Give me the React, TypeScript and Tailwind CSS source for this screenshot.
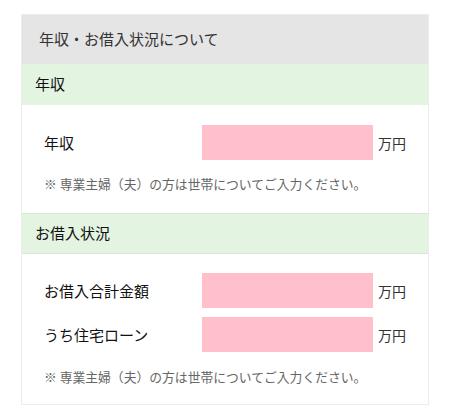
import React from "react";

const font = { fontFamily: '"Noto Sans CJK JP", "Noto Sans", sans-serif' };

function Row({ label }: { label: string }) {
  return (
    <div className="flex items-center">
      <div className="flex-1 text-[15px] text-[#111] leading-none">{label}</div>
      <div className="w-[171px] h-[35px] bg-[#ffc0cb]" />
      <div className="ml-[5px] w-[28px] text-[14px] text-[#333] leading-none">万円</div>
    </div>
  );
}

function Note() {
  return (
    <div className="text-[12.8px] leading-[18px] text-[#666]">
      ※ 専業主婦（夫）の方は世帯についてご入力ください。
    </div>
  );
}

export default function App() {
  return (
    <div className="w-[450px] h-[418px] bg-white pt-[14px]" style={font}>
      <div className="mx-[21px] border border-[#ececec] bg-white">
        <div className="h-[49px] bg-[#e5e5e5] flex items-center pl-[17px] text-[15px] text-[#333]">
          年収・お借入状況について
        </div>
        <div className="h-[41px] bg-[#e3f4e1] flex items-center pl-[13px] text-[15px] text-[#111]">
          年収
        </div>
        <div className="px-[22px] pt-[20px] pb-[20px]">
          <Row label="年収" />
          <div className="mt-[15px]">
            <Note />
          </div>
        </div>
        <div className="h-[41px] bg-[#e3f4e1] border-y border-[#d8e6d6] flex items-center pl-[13px] text-[15px] text-[#111]">
          お借入状況
        </div>
        <div className="px-[22px] pt-[19px] pb-[18px]">
          <div className="flex flex-col gap-[9px]">
            <Row label="お借入合計金額" />
            <Row label="うち住宅ローン" />
          </div>
          <div className="mt-[16px]">
            <Note />
          </div>
        </div>
      </div>
    </div>
  );
}
